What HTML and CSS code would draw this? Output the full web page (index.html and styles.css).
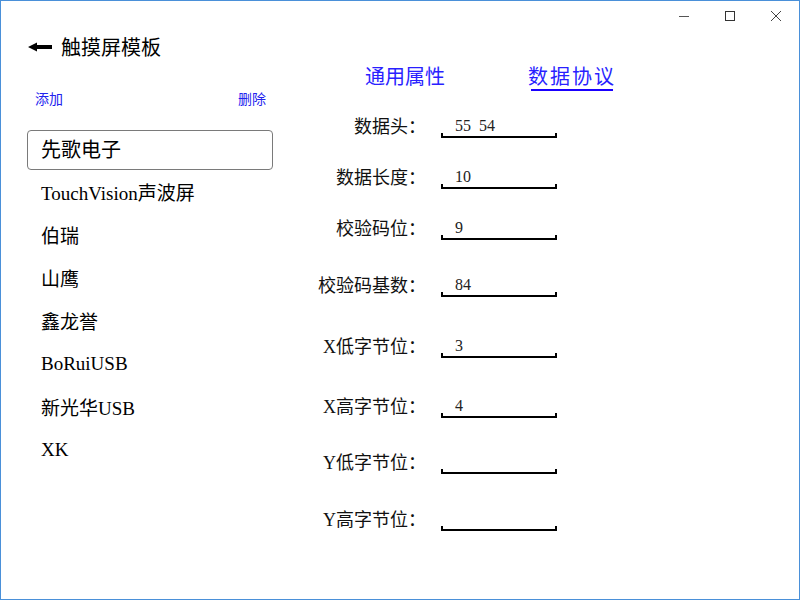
FILE: index.html
```html
<!DOCTYPE html>
<html lang="zh-CN">
<head>
<meta charset="utf-8">
<title>触摸屏模板</title>
<link rel="stylesheet" href="styles.css">
</head>
<body>
<div class="window">
  <div class="titlebar">
    <div class="tb-btn">
      <svg width="12" height="12" viewBox="0 0 12 12"><line x1="1" y1="6.5" x2="11" y2="6.5" stroke="#555" stroke-width="1"/></svg>
    </div>
    <div class="tb-btn">
      <svg width="12" height="12" viewBox="0 0 12 12"><rect x="1.5" y="1.5" width="9" height="9" fill="none" stroke="#333" stroke-width="1"/></svg>
    </div>
    <div class="tb-btn">
      <svg width="12" height="12" viewBox="0 0 12 12"><path d="M1 1 L11 11 M11 1 L1 11" stroke="#444" stroke-width="1"/></svg>
    </div>
  </div>
  <div class="content">
    <div class="left">
      <div class="header">
        <svg class="back" width="24" height="10" viewBox="0 0 24 10"><path d="M0 5 L9 0.5 L9 3 L24 3 L24 7 L9 7 L9 9.5 Z" fill="#000"/></svg>
        <span class="title">触摸屏模板</span>
      </div>
      <div class="actions">
        <span class="link">添加</span>
        <span class="link">删除</span>
      </div>
      <div class="list">
        <div class="item selected">先歌电子</div>
        <div class="item">TouchVision声波屏</div>
        <div class="item">伯瑞</div>
        <div class="item">山鹰</div>
        <div class="item">鑫龙誉</div>
        <div class="item">BoRuiUSB</div>
        <div class="item">新光华USB</div>
        <div class="item">XK</div>
      </div>
    </div>
    <div class="right">
      <div class="tabs">
        <span class="tab">通用属性</span>
        <span class="tab active">数据协议</span>
      </div>
      <div class="form">
        <div class="row"><span class="label">数据头：</span><span class="field">55 54</span></div>
        <div class="row"><span class="label">数据长度：</span><span class="field">10</span></div>
        <div class="row"><span class="label">校验码位：</span><span class="field">9</span></div>
        <div class="row"><span class="label">校验码基数：</span><span class="field">84</span></div>
        <div class="row"><span class="label">X低字节位：</span><span class="field">3</span></div>
        <div class="row"><span class="label">X高字节位：</span><span class="field">4</span></div>
        <div class="row"><span class="label">Y低字节位：</span><span class="field"></span></div>
        <div class="row"><span class="label">Y高字节位：</span><span class="field"></span></div>
      </div>
    </div>
  </div>
</div>
</body>
</html>
```
FILE: styles.css
```css
html, body {
  margin: 0;
  padding: 0;
  background: #fff;
}
.window {
  width: 800px;
  height: 600px;
  box-sizing: border-box;
  border: 1px solid #4a90d9;
  background: #fff;
  display: flex;
  flex-direction: column;
  font-family: "Noto Sans CJK SC", sans-serif;
  color: #000;
}
.titlebar {
  height: 30px;
  display: flex;
  justify-content: flex-end;
}
.tb-btn {
  width: 46px;
  height: 30px;
  display: flex;
  align-items: center;
  justify-content: center;
}
.content {
  flex: 1;
  display: flex;
}
.left {
  width: 289px;
  display: flex;
  flex-direction: column;
}
.header {
  height: 32px;
  display: flex;
  align-items: center;
  padding-left: 27px;
  gap: 9px;
}
.back {
  display: block;
}
.title {
  font-size: 20px;
  line-height: 24px;
}
.actions {
  margin-top: 25px;
  height: 20px;
  display: flex;
  justify-content: space-between;
  padding-left: 34px;
  padding-right: 24px;
}
.link {
  font-size: 14px;
  line-height: 20px;
  color: #2222ee;
}
.list {
  margin: 22px 0 0 26px;
  width: 246px;
  display: flex;
  flex-direction: column;
  gap: 3px;
}
.item {
  height: 40px;
  box-sizing: border-box;
  border: 1px solid transparent;
  border-radius: 4px;
  padding-left: 13px;
  padding-bottom: 3px;
  display: flex;
  align-items: center;
  font-family: "Liberation Serif", "Noto Sans CJK SC", serif;
  font-size: 19px;
}
.item.selected {
  border-color: #7a7a7a;
  font-family: "Noto Sans CJK SC", sans-serif;
  font-size: 20px;
}
.right {
  flex: 1;
  display: flex;
  flex-direction: column;
}
.tabs {
  margin-top: 33px;
  padding-left: 75px;
  display: flex;
  gap: 83px;
}
.tab {
  font-size: 20px;
  line-height: 24px;
  padding-bottom: 3px;
  color: #2a1fff;
}
.tab.active {
  letter-spacing: 2px;
  background: linear-gradient(#1a00ff, #1a00ff) center bottom / calc(100% - 6px) 2px no-repeat;
}
.form {
  margin-top: 25px;
  display: flex;
  flex-direction: column;
}
.row {
  height: 22px;
  display: flex;
  align-items: center;
}
.row:nth-child(2) { margin-top: 29px; }
.row:nth-child(3) { margin-top: 29px; }
.row:nth-child(4) { margin-top: 35px; }
.row:nth-child(5) { margin-top: 39px; }
.row:nth-child(6) { margin-top: 38px; }
.row:nth-child(7) { margin-top: 34px; }
.row:nth-child(8) { margin-top: 35px; }
.label {
  width: 136px;
  text-align: right;
  font-family: "Liberation Serif", "Noto Sans CJK SC", serif;
  font-size: 18px;
  line-height: 22px;
  color: #111;
}
.field {
  margin-left: 15px;
  align-self: stretch;
  width: 116px;
  box-sizing: border-box;
  border-bottom: 2px solid #000;
  padding-left: 14px;
  padding-top: 1px;
  font-family: "Liberation Serif", serif;
  font-size: 16px;
  line-height: 18px;
  word-spacing: 4px;
  color: #222;
  background:
    linear-gradient(#000, #000) left bottom / 2px 5px no-repeat,
    linear-gradient(#000, #000) right bottom / 2px 5px no-repeat;
  background-origin: border-box;
}
```
